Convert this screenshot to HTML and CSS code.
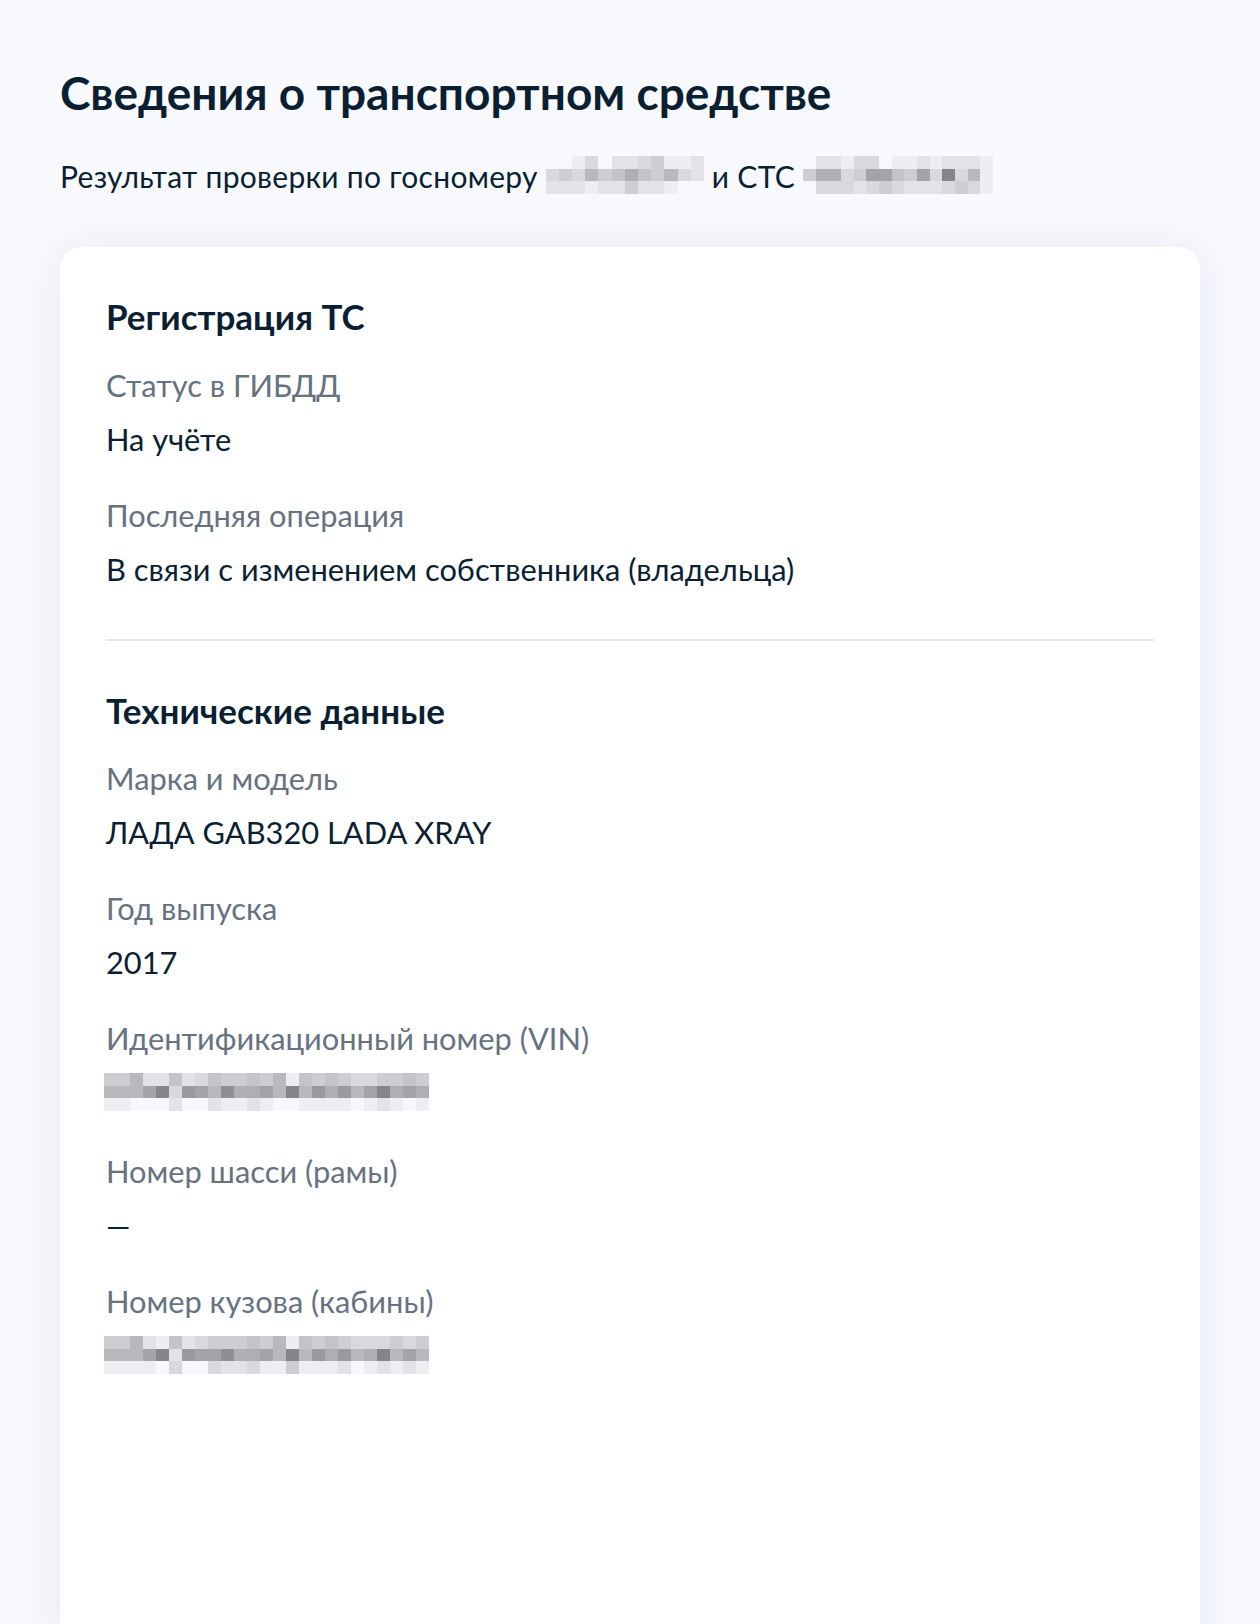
FILE: index.html
```html
<!DOCTYPE html>
<html lang="ru">

<head>
    <meta charset="UTF-8">
    <meta name="viewport" content="width=device-width, initial-scale=1.0">
    <title>Сведения о транспортном средстве</title>
    <link rel="stylesheet" href="styles.css">
</head>

<body>
    <div class="page">
        <h1 class="title">Сведения о транспортном средстве</h1>
        <p class="subtitle">
            Результат проверки по госномеру
            <span class="mosaic mosaic-plate" data-rows="001302234112|343645754632|222122422100"></span>
            и СТС
            <span class="mosaic mosaic-sts" data-rows="022133011212221|47734885483b361|033323432223431"></span>
        </p>

        <div class="card">
            <section class="section">
                <h2 class="section-title">Регистрация ТС</h2>
                <div class="field">
                    <div class="field-label">Статус в ГИБДД</div>
                    <div class="field-value">На учёте</div>
                </div>
                <div class="field">
                    <div class="field-label">Последняя операция</div>
                    <div class="field-value">В связи с изменением собственника (владельца)</div>
                </div>
            </section>

            <hr class="divider">

            <section class="section">
                <h2 class="section-title">Технические данные</h2>
                <div class="field">
                    <div class="field-label">Марка и модель</div>
                    <div class="field-value">ЛАДА GAB320 LADA XRAY</div>
                </div>
                <div class="field">
                    <div class="field-label">Год выпуска</div>
                    <div class="field-value">2017</div>
                </div>
                <div class="field">
                    <div class="field-label">Идентификационный номер (VIN)</div>
                    <div class="field-value">
                        <span class="mosaic mosaic-vin" data-rows="4462252354454615454334454|6668b3986a7786b697968b787|1100020021121001111012101"></span>
                    </div>
                </div>
                <div class="field">
                    <div class="field-label">Номер шасси (рамы)</div>
                    <div class="field-value">—</div>
                </div>
                <div class="field">
                    <div class="field-label">Номер кузова (кабины)</div>
                    <div class="field-value">
                        <span class="mosaic mosaic-vin" data-rows="4462152344454615454333434|6668b2988a7786b697967b686|1111030032231141112012121"></span>
                    </div>
                </div>
            </section>
        </div>
    </div>

    <script>
        // hidden numbers are drawn as grey pixel blocks
        document.querySelectorAll(".mosaic").forEach(function (el) {
            el.dataset.rows.split("|").forEach(function (row) {
                var line = document.createElement("span");
                line.className = "mosaic-row";
                for (var i = 0; i < row.length; i++) {
                    var v = parseInt(row[i], 16);
                    var c = Math.round(246 - v * 10.5);
                    var cell = document.createElement("span");
                    cell.className = "mosaic-cell";
                    cell.style.background = "rgb(" + c + "," + (c + 2) + "," + (c + 6) + ")";
                    line.appendChild(cell);
                }
                el.appendChild(line);
            });
        });
    </script>
</body>

</html>
```

FILE: styles.css
```css
* {
    margin: 0;
    padding: 0;
    box-sizing: border-box;
}

html,
body {
    height: 1624px;
    overflow: hidden;
}

body {
    background: #f8f9fc;
    font-family: Lato, "Noto Sans", sans-serif;
    color: #0b1f33;
}

.page {
    height: 1624px;
    display: flex;
    flex-direction: column;
    padding: 65px 60px 0;
    background: linear-gradient(#f9fafd 0, #f9fafd 70px, #f8f9fc 70px);
}

.title {
    font-size: 46px;
    line-height: 56px;
    font-weight: 700;
}

.subtitle {
    margin-top: 35px;
    font-size: 30px;
    line-height: 40px;
    letter-spacing: 0.3px;
}

.card {
    flex: 1;
    margin-top: 51px;
    margin-bottom: -30px;
    padding: 48px 46px 0;
    background: #fff;
    border-radius: 22px;
    box-shadow: 0 4px 40px rgba(90, 120, 180, 0.12);
}

.section-title {
    font-size: 35px;
    line-height: 42px;
    font-weight: 700;
    margin-bottom: 29px;
}

.field + .field {
    margin-top: 36px;
}

.field-label {
    font-size: 30.8px;
    line-height: 40px;
    color: #66727f;
}

.field-value {
    margin-top: 14px;
    font-size: 30.8px;
    line-height: 40px;
    min-height: 40px;
}

.divider {
    border: none;
    height: 2px;
    background: #e3e4e6;
    margin: 49px 0 48px;
}

.divider + .section .section-title {
    margin-bottom: 28px;
}

.mosaic {
    display: inline-block;
    overflow: hidden;
    height: 38px;
    vertical-align: -6px;
    letter-spacing: 0;
}

.mosaic-row {
    display: flex;
    height: 33.333%;
}

.mosaic-cell {
    flex: 1;
}

.mosaic-plate {
    width: 158px;
}

.mosaic-sts {
    width: 190px;
}

.mosaic-vin {
    display: block;
    width: 325px;
    margin-top: 9px;
    margin-left: -2px;
}

.field-value:has(.mosaic) {
    height: 43px;
}
```
